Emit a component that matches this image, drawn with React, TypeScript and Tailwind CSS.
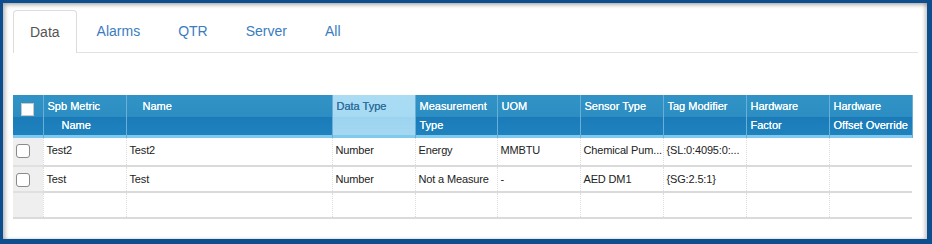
const tabs = ["Data", "Alarms", "QTR", "Server", "All"];

const columns = [
  { key: "spb", label: ["Spb Metric", "Name"], width: "w-[83px]", indent: ["pl-[4px]", "pl-[18px]"] },
  { key: "name", label: ["Name"], width: "w-[206px]", indent: ["pl-[16px]"] },
  { key: "type", label: ["Data Type"], width: "w-[83px]", sorted: true },
  { key: "meas", label: ["Measurement", "Type"], width: "w-[82px]" },
  { key: "uom", label: ["UOM"], width: "w-[83px]" },
  { key: "sensor", label: ["Sensor Type"], width: "w-[83px]" },
  { key: "tag", label: ["Tag Modifier"], width: "w-[83px]" },
  { key: "hwf", label: ["Hardware", "Factor"], width: "w-[83px]" },
  { key: "hwo", label: ["Hardware", "Offset Override"], width: "w-[83px]" },
];

// values shown as the grid clips them
const rows = [
  {
    spb: "Test2",
    name: "Test2",
    type: "Number",
    meas: "Energy",
    uom: "MMBTU",
    sensor: "Chemical Pum...",
    tag: "{SL:0:4095:0:...",
    hwf: "",
    hwo: "",
  },
  {
    spb: "Test",
    name: "Test",
    type: "Number",
    meas: "Not a Measure",
    uom: "-",
    sensor: "AED DM1",
    tag: "{SG:2.5:1}",
    hwf: "",
    hwo: "",
  },
];

const headBg =
  "bg-[linear-gradient(to_bottom,#3193c5_0%,#2c8dc2_50%,#1a7bb8_52%,#1f82bd_93%,#7fcaee_94%,#7fcaee_100%)]";
const sortedBg =
  "bg-[linear-gradient(to_bottom,#aadcf4_0%,#a6daf3_50%,#9cd3ef_52%,#a4d8f1_93%,#7fcaee_94%,#7fcaee_100%)]";

const Checkbox = () => (
  <div className="w-[14px] h-[14px] rounded-[3px] border border-[#8a8a8a] bg-white" />
);

const App = () => {
  return (
    <div
      className="w-[932px] h-[244px] bg-[#0d4e8e] pl-[3px] pt-[3px] pr-[5px] pb-[5px]"
      style={{ fontFamily: '"Liberation Sans", Arial, sans-serif' }}
    >
      <div className="h-full bg-white shadow-[inset_2px_2px_4px_rgba(0,0,0,0.3),inset_-3px_0_3px_rgba(0,0,0,0.15)] pl-[10px] pr-[9px] pt-[7px]">
        {/* tabs */}
        <div className="flex h-[43px] border-b border-[#e2e2e2]">
          {tabs.map((t, i) => (
            <div
              key={t}
              className={
                i === 0
                  ? "h-[43px] px-[16px] mr-[2px] flex items-center border border-b-0 border-[#dcdcdc] rounded-t-[4px] bg-white text-[14px] text-[#555] -mb-px"
                  : "h-[42px] px-[17px] mr-[2px] flex items-center border border-transparent text-[14px] text-[#3b7cc0]"
              }
            >
              {t}
            </div>
          ))}
        </div>

        {/* grid */}
        <div className="mt-[42px]">
          <table className="table-fixed w-[899px] border-collapse text-[11px]">
            <colgroup>
              <col className="w-[30px]" />
              {columns.map((c) => (
                <col key={c.key} className={c.width} />
              ))}
            </colgroup>
            <thead>
              <tr className="h-[43px]">
                <th className={`p-0 align-top border-r border-[#6aafd6] ${headBg}`}>
                  <div className="flex justify-center pt-[8px]">
                    <div className="w-[13px] h-[13px] bg-white border border-[#c8c8c8]" />
                  </div>
                </th>
                {columns.map((c) => (
                  <th
                    key={c.key}
                    className={`p-0 overflow-hidden align-top text-left font-normal border-r border-[#6aafd6] ${
                      c.sorted ? `${sortedBg} text-[#2f6e9e]` : `${headBg} text-white`
                    }`}
                  >
                    <div className="pt-[2px] leading-[19px] [text-shadow:0_0_0.4px_currentColor]">
                      {c.label.map((l, i) => (
                        <div key={i} className={`whitespace-nowrap ${c.indent ? c.indent[i] : "pl-[4px]"}`}>
                          {l}
                        </div>
                      ))}
                    </div>
                  </th>
                ))}
              </tr>
            </thead>
            <tbody>
              {rows.map((r, ri) => (
                <tr key={ri} className={ri === 0 ? "h-[28px]" : "h-[26px]"}>
                  <td className="p-0 align-top bg-[#efefef] border-b-2 border-[#e0e0e0]">
                    <div className="pl-[3px] pt-[6px]">
                      <Checkbox />
                    </div>
                  </td>
                  {columns.map((c) => (
                    <td
                      key={c.key}
                      className="p-0 align-top text-[#222] border-b-2 border-b-[#dadada] border-l border-l-[#dcdcdc] border-dotted"
                      style={{ borderBottomStyle: "solid" }}
                    >
                      <div className="pl-[3px] pt-[4px] whitespace-nowrap tracking-[-0.15px]">
                        {(r as Record<string, string>)[c.key]}
                      </div>
                    </td>
                  ))}
                </tr>
              ))}
              <tr className="h-[26px]">
                <td className="p-0 bg-[#efefef] border-b-2 border-[#dadada]" />
                {columns.map((c) => (
                  <td
                    key={c.key}
                    className="p-0 border-b-2 border-b-[#dadada] border-l border-l-[#dcdcdc] border-dotted"
                    style={{ borderBottomStyle: "solid" }}
                  />
                ))}
              </tr>
            </tbody>
          </table>
        </div>
      </div>
    </div>
  );
};

export default App;
